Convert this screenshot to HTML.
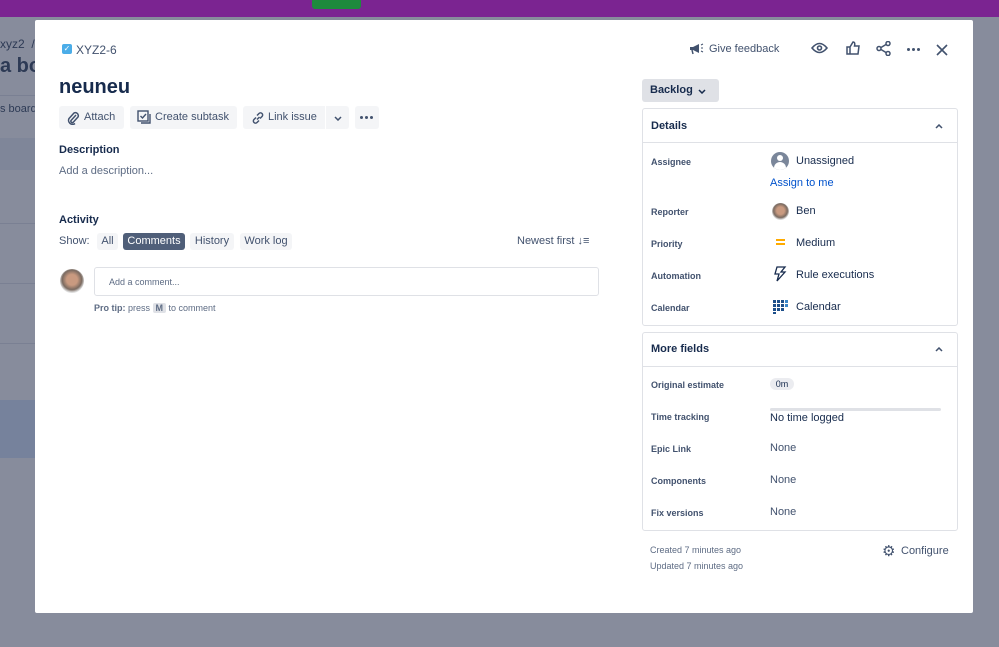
<!DOCTYPE html>
<html><head><meta charset="utf-8"><style>
*{box-sizing:border-box;margin:0;padding:0}
body{width:999px;height:647px;overflow:hidden;background:#878c9c;font-family:"Liberation Sans",sans-serif;color:#172b4d;position:relative}
.top{position:absolute;left:0;top:0;width:999px;height:17px;background:#7b2491}
.top .cr{position:absolute;left:312px;top:0;width:49px;height:9px;background:#1e8a3d;border-radius:0 0 3px 3px}
.bg{position:absolute;color:#2d3a55;font-size:13px;white-space:nowrap}
.modal{position:absolute;left:35px;top:20px;width:938px;height:593px;background:#fff;border-radius:2px}
.a{position:absolute;white-space:nowrap}
.btn{position:absolute;height:23px;background:#f4f5f7;border-radius:3px;font-size:11px;color:#42526e;line-height:23px;white-space:nowrap}
.lbl{font-size:9px;font-weight:bold;color:#42526e}
.val{font-size:11px;color:#172b4d}
.box{position:absolute;border:1px solid #dfe1e6;border-radius:3px}
.dots{position:absolute;display:flex;gap:2px}
.dots i{width:3px;height:3px;border-radius:50%;background:#42526e;display:block}
</style></head><body>
<div class="top"><div class="cr"></div></div>
<div class="bg" style="left:0;top:37px;font-size:12px">xyz2 &nbsp;/</div>
<div class="bg" style="left:0;top:55px;font-size:20px;font-weight:bold">a boa</div>
<div style="position:absolute;left:0;top:95px;width:35px;height:1px;background:#7a8093"></div>
<div class="bg" style="left:0;top:103px;font-size:11px">s board</div>
<div style="position:absolute;left:0;top:138px;width:35px;height:32px;background:#7f8699"></div>
<div style="position:absolute;left:0;top:223px;width:35px;height:1px;background:#7a8093"></div>
<div style="position:absolute;left:0;top:283px;width:35px;height:1px;background:#7a8093"></div>
<div style="position:absolute;left:0;top:343px;width:35px;height:1px;background:#7a8093"></div>
<div style="position:absolute;left:0;top:400px;width:35px;height:58px;background:#76829c"></div>

<div class="modal">
<div class="a" style="left:27px;top:24px;width:10px;height:10px;background:#4bade8;border-radius:2px;color:#fff;font-size:8px;line-height:10px;text-align:center">✓</div>
<div class="a" style="left:41px;top:23px;font-size:12px;color:#42526e">XYZ2-6</div>
<div class="a" style="left:24px;top:56px;font-size:20px;font-weight:bold">neuneu</div>

<div class="btn" style="left:24px;top:86px;width:65px"><svg style="position:absolute;left:8px;top:5px" width="13" height="14" viewBox="0 0 13 14"><path d="M9 4 L4 9.5 a1.5 1.5 0 0 0 2 2 L11 6 a3 3 0 0 0-4-4 L2 7.5 a4 4 0 0 0 6 5" fill="none" stroke="#42526e" stroke-width="1.5"/></svg><span style="position:absolute;left:25px">Attach</span></div>
<div class="btn" style="left:95px;top:86px;width:107px"><svg style="position:absolute;left:7px;top:4px" width="14" height="14" viewBox="0 0 14 14"><rect x="1" y="1" width="10" height="10" fill="none" stroke="#42526e" stroke-width="1.4"/><path d="M3.5 6l2 2 3.5-4" fill="none" stroke="#42526e" stroke-width="1.4"/><path d="M13 4v9H4" fill="none" stroke="#42526e" stroke-width="1.4"/></svg><span style="position:absolute;left:25px">Create subtask</span></div>
<div class="btn" style="left:208px;top:86px;width:82px;border-radius:3px 0 0 3px"><svg style="position:absolute;left:8px;top:5px" width="14" height="14" viewBox="0 0 14 14"><path d="M6 8.5 L8.5 6 M5 6.5 L3 8.5 a2.1 2.1 0 0 0 3 3 L8 9.5 M9 7.5 L11 5.5 a2.1 2.1 0 0 0-3-3 L6 4.5" fill="none" stroke="#42526e" stroke-width="1.5"/></svg><span style="position:absolute;left:25px">Link issue</span></div>
<div class="btn" style="left:291px;top:86px;width:23px;border-radius:0 3px 3px 0"><svg style="position:absolute;left:8px;top:10px" width="8" height="5" viewBox="0 0 8 5"><path d="M1 1l3 3 3-3" fill="none" stroke="#42526e" stroke-width="1.5"/></svg></div>
<div class="btn" style="left:320px;top:86px;width:24px"><div class="dots" style="left:5px;top:10px"><i></i><i></i><i></i></div></div>

<div class="a" style="left:24px;top:124px;font-size:11px;font-weight:bold">Description</div>
<div class="a" style="left:24px;top:145px;font-size:11px;color:#5e6c84">Add a description...</div>
<div class="a" style="left:24px;top:194px;font-size:11px;font-weight:bold">Activity</div>
<div class="a" style="left:24px;top:215px;font-size:11px;color:#42526e">Show:</div>
<div class="btn" style="left:62px;top:213px;width:21px;height:17px;line-height:17px;text-align:center">All</div>
<div class="btn" style="left:88px;top:213px;width:62px;height:17px;line-height:17px;text-align:center;background:#505f79;color:#fff">Comments</div>
<div class="btn" style="left:155px;top:213px;width:44px;height:17px;line-height:17px;text-align:center">History</div>
<div class="btn" style="left:205px;top:213px;width:52px;height:17px;line-height:17px;text-align:center">Work log</div>
<div class="a" style="left:482px;top:215px;font-size:11px;color:#42526e">Newest first ↓≡</div>
<div class="a" style="left:25px;top:249px;width:24px;height:24px;border-radius:50%;background:radial-gradient(circle at 50% 45%,#c99a80 0 30%,#7a6a60 55%,#ddd 70%)"></div>
<div class="a" style="left:59px;top:247px;width:505px;height:29px;border:1px solid #dfe1e6;border-radius:3px;font-size:9px;color:#5e6c84;padding:9px 14px">Add a comment...</div>
<div class="a" style="left:59px;top:283px;font-size:9px;color:#5e6c84"><b>Pro tip:</b> press <span style="background:#dfe1e6;padding:0 3px;border-radius:2px;font-weight:bold">M</span> to comment</div>

<svg class="a" style="left:653px;top:22px" width="16" height="14" viewBox="0 0 16 14"><path d="M2 5h3l6-3v9L5 8H2z" fill="#42526e"/><path d="M4 8l1 4" stroke="#42526e" stroke-width="1.5"/><path d="M13 3l2-1M13 6h2M13 9l2 1" stroke="#42526e"/></svg>
<div class="a" style="left:674px;top:23px;font-size:11px;color:#42526e">Give feedback</div>
<svg class="a" style="left:776px;top:22px" width="17" height="12" viewBox="0 0 17 12"><path d="M1 6 Q8.5-3 16 6 Q8.5 15 1 6z" fill="none" stroke="#42526e" stroke-width="1.6"/><circle cx="8.5" cy="6" r="2" fill="none" stroke="#42526e" stroke-width="1.6"/></svg>
<svg class="a" style="left:811px;top:21px" width="14" height="14" viewBox="0 0 14 14"><path d="M1 6h3v7H1z M4 6l3-5c2 0 2 2 1.5 4H13l-1 8H4" fill="none" stroke="#42526e" stroke-width="1.5"/></svg>
<svg class="a" style="left:841px;top:21px" width="15" height="15" viewBox="0 0 15 15"><circle cx="3" cy="7.5" r="2" fill="none" stroke="#42526e" stroke-width="1.5"/><circle cx="12" cy="2.5" r="2" fill="none" stroke="#42526e" stroke-width="1.5"/><circle cx="12" cy="12.5" r="2" fill="none" stroke="#42526e" stroke-width="1.5"/><path d="M5 6.5l5-3M5 8.5l5 3" stroke="#42526e" stroke-width="1.5"/></svg>
<div class="dots" style="left:872px;top:28px"><i></i><i></i><i></i></div>
<svg class="a" style="left:901px;top:24px" width="12" height="12" viewBox="0 0 12 12"><path d="M1 1l10 10M11 1L1 11" stroke="#42526e" stroke-width="1.6"/></svg>

<div class="btn" style="left:607px;top:59px;width:77px;background:#dfe1e6;font-weight:bold;color:#172b4d;padding-left:8px">Backlog<svg style="position:absolute;left:56px;top:10px" width="8" height="5" viewBox="0 0 8 5"><path d="M1 1l3 3 3-3" fill="none" stroke="#172b4d" stroke-width="1.5"/></svg></div>

<div class="box" style="left:607px;top:88px;width:316px;height:218px"></div>
<div style="position:absolute;left:607px;top:122px;width:316px;height:1px;background:#dfe1e6"></div>
<div class="a" style="left:616px;top:100px;font-size:11px;font-weight:bold">Details</div>
<svg class="a" style="left:900px;top:104px" width="8" height="5" viewBox="0 0 8 5"><path d="M1 4l3-3 3 3" fill="none" stroke="#42526e" stroke-width="1.5"/></svg>
<div class="a lbl" style="left:616px;top:137px">Assignee</div>
<div class="a" style="left:736px;top:132px;width:18px;height:18px;border-radius:50%;background:#7a869a;overflow:hidden"><div style="position:absolute;left:6px;top:3px;width:6px;height:6px;border-radius:50%;background:#fff"></div><div style="position:absolute;left:3px;top:10px;width:12px;height:9px;border-radius:6px 6px 0 0;background:#fff"></div></div>
<div class="a val" style="left:761px;top:135px">Unassigned</div>
<div class="a" style="left:735px;top:157px;font-size:11px;color:#0052cc">Assign to me</div>
<div class="a lbl" style="left:616px;top:187px">Reporter</div>
<div class="a" style="left:737px;top:183px;width:17px;height:17px;border-radius:50%;background:radial-gradient(circle at 50% 45%,#c99a80 0 30%,#7a6a60 55%,#ddd 70%)"></div>
<div class="a val" style="left:761px;top:185px">Ben</div>
<div class="a lbl" style="left:616px;top:219px">Priority</div>
<div class="a" style="left:741px;top:219px;width:9px;height:2px;background:#ffab00;box-shadow:0 4px 0 #ffab00"></div>
<div class="a val" style="left:761px;top:217px">Medium</div>
<div class="a lbl" style="left:616px;top:251px">Automation</div>
<svg class="a" style="left:739px;top:246px" width="13" height="16" viewBox="0 0 13 16"><path d="M3 1h8L7 6h4L3 15l2-7H1z" fill="none" stroke="#172b4d" stroke-width="1.3"/></svg>
<div class="a val" style="left:761px;top:249px">Rule executions</div>
<div class="a lbl" style="left:616px;top:283px">Calendar</div>
<svg class="a" style="left:738px;top:280px" width="16" height="14" viewBox="0 0 16 14"><g fill="#1d4f8a"><rect x="0" y="0" width="3" height="3"/><rect x="4" y="0" width="3" height="3"/><rect x="8" y="0" width="3" height="3"/><rect x="12" y="0" width="3" height="3" fill="#3a86c8"/><rect x="0" y="4" width="3" height="3"/><rect x="4" y="4" width="3" height="3"/><rect x="8" y="4" width="3" height="3"/><rect x="12" y="4" width="3" height="3" fill="#3a86c8"/><rect x="0" y="8" width="3" height="3"/><rect x="4" y="8" width="3" height="3"/><rect x="8" y="8" width="3" height="3"/><rect x="0" y="12" width="3" height="2"/></g></svg>
<div class="a val" style="left:761px;top:281px">Calendar</div>

<div class="box" style="left:607px;top:312px;width:316px;height:199px"></div>
<div style="position:absolute;left:607px;top:346px;width:316px;height:1px;background:#dfe1e6"></div>
<div class="a" style="left:616px;top:323px;font-size:11px;font-weight:bold">More fields</div>
<svg class="a" style="left:900px;top:327px" width="8" height="5" viewBox="0 0 8 5"><path d="M1 4l3-3 3 3" fill="none" stroke="#42526e" stroke-width="1.5"/></svg>
<div class="a lbl" style="left:616px;top:360px">Original estimate</div>
<div class="a" style="left:735px;top:358px;width:24px;height:12px;border-radius:6px;background:#ebecf0;font-size:9px;text-align:center;line-height:12px">0m</div>
<div class="a lbl" style="left:616px;top:392px">Time tracking</div>
<div class="a" style="left:735px;top:388px;width:171px;height:3px;border-radius:2px;background:#dfe1e6"></div>
<div class="a val" style="left:735px;top:392px">No time logged</div>
<div class="a lbl" style="left:616px;top:424px">Epic Link</div>
<div class="a" style="left:735px;top:422px;font-size:11px;color:#42526e">None</div>
<div class="a lbl" style="left:616px;top:456px">Components</div>
<div class="a" style="left:735px;top:454px;font-size:11px;color:#42526e">None</div>
<div class="a lbl" style="left:616px;top:488px">Fix versions</div>
<div class="a" style="left:735px;top:486px;font-size:11px;color:#42526e">None</div>

<div class="a" style="left:615px;top:525px;font-size:9px;color:#5e6c84">Created 7 minutes ago</div>
<div class="a" style="left:615px;top:541px;font-size:9px;color:#5e6c84">Updated 7 minutes ago</div>
<div class="a" style="left:847px;top:522px;font-size:15px;color:#42526e">⚙</div>
<div class="a" style="left:866px;top:525px;font-size:11px;color:#42526e">Configure</div>
</div>
</body></html>
